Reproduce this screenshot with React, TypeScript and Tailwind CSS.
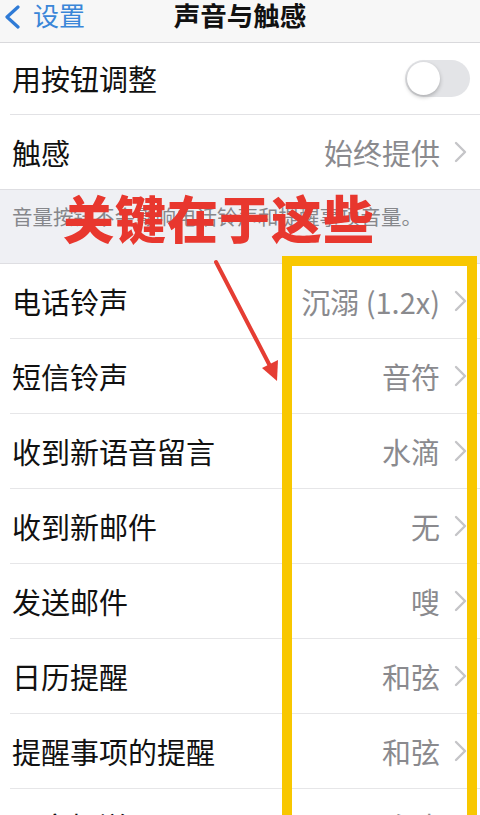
import { ReactNode } from 'react'

type Row = { label: string; value: string }

const sounds: Row[] = [
  { label: '电话铃声', value: '沉溺 (1.2x)' },
  { label: '短信铃声', value: '音符' },
  { label: '收到新语音留言', value: '水滴' },
  { label: '收到新邮件', value: '无' },
  { label: '发送邮件', value: '嗖' },
  { label: '日历提醒', value: '和弦' },
  { label: '提醒事项的提醒', value: '和弦' },
  { label: '隔空投送', value: '脉冲' },
]

function Chevron() {
  return (
    <svg width="13" height="22" viewBox="0 0 13 22" fill="none">
      <path d="M2 2 L11 11 L2 20" stroke="#c5c5c8" strokeWidth="2.4" strokeLinecap="round" strokeLinejoin="round" />
    </svg>
  )
}

function Toggle() {
  return (
    <div className="flex h-[37px] w-[65px] items-center rounded-full bg-[#e3e4e7] px-[2px]">
      <div className="h-[33px] w-[33px] rounded-full bg-white shadow-[0_2px_4px_rgba(0,0,0,0.25)]" />
    </div>
  )
}

function Cell({ label, right, className = '' }: { label: string; right: ReactNode; className?: string }) {
  return (
    <div className={`ml-[10px] flex items-center justify-between pl-[2px] ${className}`}>
      <span className="text-[29px] leading-none text-[#111]">{label}</span>
      {right}
    </div>
  )
}

function Value({ text }: { text: string }) {
  return (
    <div className="flex items-center gap-[14px] pr-[13px]">
      <span className="text-[29px] leading-none text-[#8a8a8e]">{text}</span>
      <Chevron />
    </div>
  )
}

export default function App() {
  return (
    <div className="relative h-[815px] w-[480px] overflow-hidden bg-white font-['Noto_Sans_CJK_SC',sans-serif]">
      {/* nav bar */}
      <div className="grid h-[43px] grid-cols-[1fr_auto_1fr] items-start border-b border-[#d9d9dc] bg-[#f7f7f7]">
        <div className="flex items-center gap-[12px] pl-[3px]">
          <svg width="18" height="24" viewBox="0 0 18 24" fill="none" className="mt-[3px]">
            <path d="M15 2 L4 12 L15 22" stroke="#2f7bd6" strokeWidth="3.2" strokeLinecap="round" strokeLinejoin="round" />
          </svg>
          <span className="text-[26px] leading-[30px] text-[#3a86d8]">设置</span>
        </div>
        <span className="text-[26.5px] font-bold leading-[30px] text-[#111]">声音与触感</span>
        <div />
      </div>

      <Cell label="用按钮调整" right={<div className="pr-[10px]"><Toggle /></div>} className="h-[72px] border-b border-[#e2e2e5]" />
      <Cell label="触感" right={<Value text="始终提供" />} className="h-[74px]" />

      {/* group footer */}
      <div className="flex h-[75px] items-start border-y border-[#dedee2] bg-[#eff0f4] pl-[12px] pt-[15px]">
        <span className="text-[20.5px] leading-[22px] text-[#86878b]">音量按钮不会影响电话铃声和提醒事项音量。</span>
      </div>

      {sounds.map((row) => (
        <Cell key={row.label} label={row.label} right={<Value text={row.value} />} className="h-[75px] border-b border-[#e6e6e8]" />
      ))}

      {/* annotation overlay */}
      <div className="pointer-events-none absolute left-[63px] top-[187px] text-[51px] font-black leading-[60px] tracking-[1px] text-[#e8372e]">
        关键在于这些
      </div>
      <svg className="pointer-events-none absolute left-0 top-0" width="480" height="815" viewBox="0 0 480 815">
        <line x1="216" y1="262" x2="270" y2="366" stroke="#e53d33" strokeWidth="4" strokeLinecap="round" />
        <polygon points="262,368 278,360 277,381" fill="#e53d33" />
      </svg>
      <div className="pointer-events-none absolute left-[282px] top-[256px] h-[600px] w-[195px] border-[10px] border-[#f8c700]" />
    </div>
  )
}
